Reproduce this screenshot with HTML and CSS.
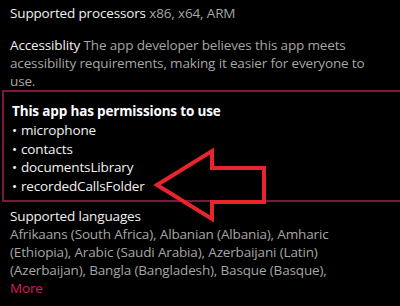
FILE: index.html
```html
<!DOCTYPE html>
<html>
<head>
<meta charset="utf-8">
<link rel="stylesheet" href="styles.css">
</head>
<body>
<div class="page">
  <p class="row top"><span class="label">Supported processors</span> <span class="value">x86, x64, ARM</span></p>
  <p class="row"><span class="label">Accessiblity</span> <span class="value">The app developer believes this app meets acessibility requirements, making it easier for everyone to use.</span></p>
  <div class="perm">
    <div class="perm-title">This app has permissions to use</div>
    <ul class="perm-list">
      <li>microphone</li>
      <li>contacts</li>
      <li>documentsLibrary</li>
      <li>recordedCallsFolder</li>
    </ul>
  </div>
  <div class="langs">
    <div class="label">Supported languages</div>
    <div class="value">Afrikaans (South Africa), Albanian (Albania), Amharic (Ethiopia), Arabic (Saudi Arabia), Azerbaijani (Latin) (Azerbaijan), Bangla (Bangladesh), Basque (Basque),</div>
    <div class="more">More</div>
  </div>
  <svg class="arrow" width="400" height="306" viewBox="0 0 400 306">
    <polygon points="157,185 212,151 212,168 264,168 264,202 212,202 212,219" fill="none" stroke="#e8242c" stroke-width="4" stroke-linejoin="miter"/>
  </svg>
</div>
</body>
</html>
```
FILE: styles.css
```css
html, body {
  margin: 0;
  padding: 0;
  background: #000;
}
.page {
  position: relative;
  width: 400px;
  height: 306px;
  overflow: hidden;
  font-family: "Open Sans", "Noto Sans", sans-serif;
  font-size: 13.5px;
  line-height: 18px;
  letter-spacing: -0.15px;
  color: #f2f2f2;
}
.row {
  margin: 0;
  padding: 0 20px 0 10px;
}
.row.top {
  padding-top: 4px;
  margin-bottom: 14px;
}
.label {
  color: #f0f0f0;
}
.value {
  color: #a6a6a6;
}
.perm {
  margin: 0 -20px 0 2px;
  border: 2px solid #7a1840;
  padding: 10px 0 5px 8px;
}
.perm-title {
  font-weight: 700;
  color: #ffffff;
  line-height: 19px;
}
.perm-list {
  list-style: none;
  margin: 0;
  padding: 0;
}
.perm-list li {
  line-height: 18.5px;
  color: #f2f2f2;
}
.perm-list li::before {
  content: "\2022";
  display: inline-block;
  width: 9px;
}
.langs {
  padding: 5px 20px 0 10px;
}
.more {
  color: #d81b60;
}
.arrow {
  position: absolute;
  left: 0;
  top: 0;
}
```
